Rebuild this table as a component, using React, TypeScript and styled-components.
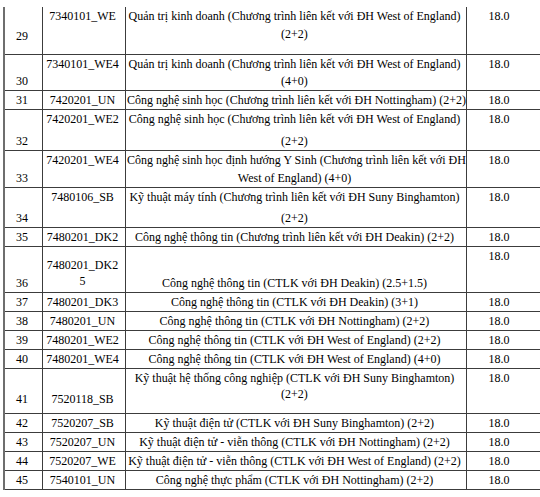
import styled, { createGlobalStyle } from "styled-components";

const GlobalStyle = createGlobalStyle`
  html, body {
    margin: 0;
    padding: 0;
    background: #ffffff;
  }
  body {
    font-family: "Liberation Serif", "Times New Roman", serif;
    color: #000;
  }
`;

type Align = "spread" | "top" | "bottom";

interface ICell {
  lines: string[];
  align?: Align;
  padBottom?: number;
}

interface IRow {
  stt: ICell;
  code: ICell;
  name: ICell;
  score: ICell;
  height: number;
}

const c = (lines: string[], align: Align = "spread", padBottom = 1): ICell => ({
  lines,
  align,
  padBottom,
});

// single line row
const one = (stt: string, code: string, name: string): IRow => ({
  stt: c([stt]),
  code: c([code]),
  name: c([name]),
  score: c(["18.0"]),
  height: 19,
});

// two line row: number and code sit on the first / second line like in the source
const two = (stt: string, code: string, name: [string, string], height: number): IRow => ({
  stt: c(["", stt]),
  code: c([code, ""]),
  name: c(name),
  score: c(["18.0", ""]),
  height,
});

const rows: IRow[] = [
  {
    stt: c(["", "29"], "spread", 10),
    code: c(["7340101_WE", ""], "spread", 10),
    name: c(["Quản trị kinh doanh (Chương trình liên kết với ĐH West of England)", "(2+2)"], "spread", 12),
    score: c(["18.0", ""], "spread", 10),
    height: 48,
  },
  two("30", "7340101_WE4", ["Quản trị kinh doanh (Chương trình liên kết với ĐH West of England)", "(4+0)"], 36),
  one("31", "7420201_UN", "Công nghệ sinh học (Chương trình liên kết với ĐH Nottingham) (2+2)"),
  two("32", "7420201_WE2", ["Công nghệ sinh học (Chương trình liên kết với ĐH West of England)", "(2+2)"], 41),
  two("33", "7420201_WE4", ["Công nghệ sinh học định hướng Y Sinh (Chương trình liên kết với ĐH", "West of England) (4+0)"], 37),
  two("34", "7480106_SB", ["Kỹ thuật máy tính (Chương trình liên kết với ĐH Suny Binghamton)", "(2+2)"], 40),
  one("35", "7480201_DK2", "Công nghệ thông tin (Chương trình liên kết với ĐH Deakin) (2+2)"),
  {
    stt: c(["", "36"]),
    code: c(["7480201_DK2", "5"], "bottom", 3),
    name: c(["", "Công nghệ thông tin (CTLK với ĐH Deakin) (2.5+1.5)"]),
    score: c(["18.0", ""]),
    height: 46,
  },
  one("37", "7480201_DK3", "Công nghệ thông tin (CTLK với ĐH Deakin) (3+1)"),
  one("38", "7480201_UN", "Công nghệ thông tin (CTLK với ĐH Nottingham) (2+2)"),
  one("39", "7480201_WE2", "Công nghệ thông tin (CTLK với ĐH West of England) (2+2)"),
  one("40", "7480201_WE4", "Công nghệ thông tin (CTLK với ĐH West of England) (4+0)"),
  {
    stt: c(["41"], "bottom", 6),
    code: c(["7520118_SB"], "bottom", 6),
    name: c(["Kỹ thuật hệ thống công nghiệp (CTLK với ĐH Suny Binghamton)", "(2+2)"], "top"),
    score: c(["18.0"], "top"),
    height: 45,
  },
  one("42", "7520207_SB", "Kỹ thuật điện tử (CTLK với ĐH Suny Binghamton) (2+2)"),
  one("43", "7520207_UN", "Kỹ thuật điện tử - viễn thông (CTLK với ĐH Nottingham) (2+2)"),
  one("44", "7520207_WE", "Kỹ thuật điện tử - viễn thông (CTLK với ĐH West of England) (2+2)"),
  one("45", "7540101_UN", "Công nghệ thực phẩm (CTLK với ĐH Nottingham) (2+2)"),
];

const justify = {
  spread: "space-between",
  top: "flex-start",
  bottom: "flex-end",
};

const Page = styled.div`
  padding: 7px 0 0 3px;
`;

const Table = styled.div`
  width: 536px;
  border-left: 2px solid #6e6e6e;
  border-right: 1px solid #3c3c3c;
`;

const Row = styled.div<{ $height: number }>`
  display: grid;
  grid-template-columns: 37px 83px 341px 72px;
  height: ${(p) => p.$height}px;
  border-bottom: 1px solid #3c3c3c;
  box-sizing: border-box;
`;

const Cell = styled.div<{ $first?: boolean; $last?: boolean; $align: Align; $padBottom: number }>`
  display: flex;
  flex-direction: column;
  justify-content: ${(p) => justify[p.$align]};
  box-sizing: border-box;
  padding: 1px ${(p) => (p.$last ? 8 : 4)}px ${(p) => p.$padBottom}px 1px;
  border-left: ${(p) => (p.$first ? "none" : "1px solid #3c3c3c")};
  font-size: 12px;
  text-align: center;
`;

const Line = styled.div`
  line-height: 16px;
  height: 16px;
  white-space: nowrap;
`;

function TableCell({ cell, first, last }: { cell: ICell; first?: boolean; last?: boolean }) {
  return (
    <Cell
      $first={first}
      $last={last}
      $align={cell.align || "spread"}
      $padBottom={cell.padBottom ?? 1}
    >
      {cell.lines.map((t, i) => (
        <Line key={i}>{t}</Line>
      ))}
    </Cell>
  );
}

function App() {
  return (
    <>
      <GlobalStyle />
      <Page>
        <Table>
          {rows.map((r, i) => (
            <Row key={i} $height={r.height}>
              <TableCell cell={r.stt} first />
              <TableCell cell={r.code} />
              <TableCell cell={r.name} />
              <TableCell cell={r.score} last />
            </Row>
          ))}
        </Table>
      </Page>
    </>
  );
}

export default App;
